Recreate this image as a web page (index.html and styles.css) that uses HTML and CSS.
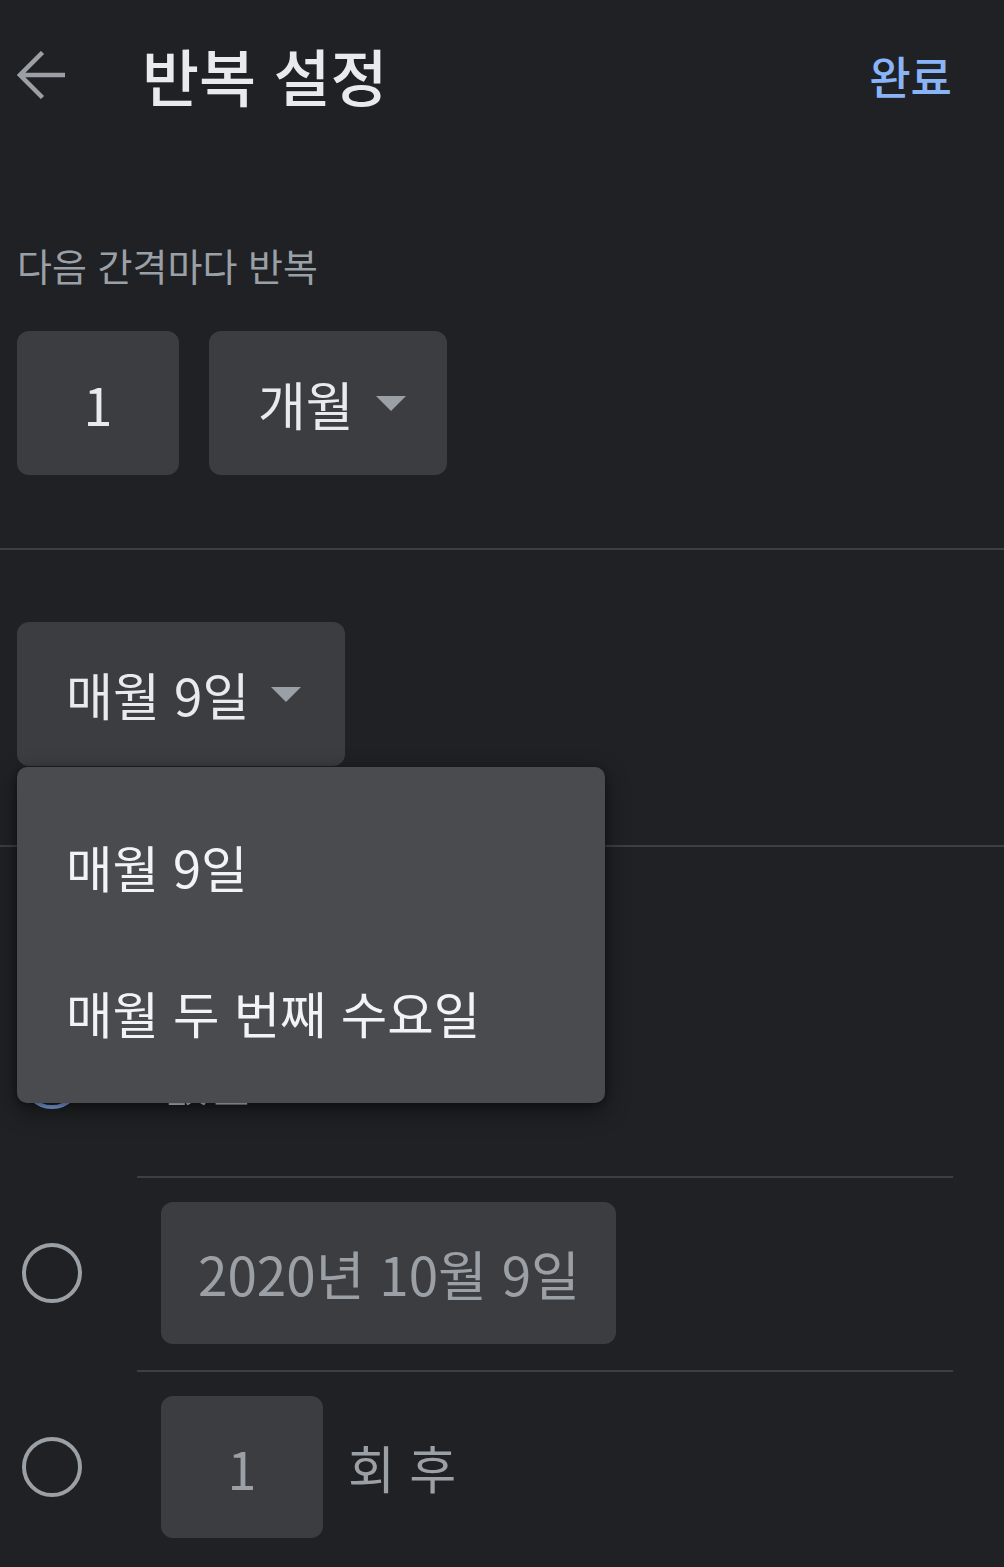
FILE: index.html
```html
<!DOCTYPE html>
<html lang="ko">
<head>
<meta charset="utf-8">
<title>반복 설정</title>
<link rel="stylesheet" href="styles.css">
</head>
<body>
<div class="screen">
  <header class="appbar">
    <button class="back" aria-label="뒤로">
      <svg width="48" height="48" viewBox="0 0 48 48"><path d="M48 24H3M25.5 1.5L3 24l22.5 22.5" fill="none" stroke="#9aa0a6" stroke-width="4.5"/></svg>
    </button>
    <h1 class="title">반복 설정</h1>
    <button class="done">완료</button>
  </header>

  <section class="interval">
    <div class="label">다음 간격마다 반복</div>
    <div class="field-row">
      <div class="field num">1</div>
      <div class="field select">개월<span class="caret"></span></div>
    </div>
  </section>

  <hr class="divider">

  <section class="monthly">
    <div class="select-wrap">
      <div class="field select">매월 9일<span class="caret"></span></div>
      <div class="menu">
        <div class="menu-item">매월 9일</div>
        <div class="menu-item">매월 두 번째 수요일</div>
      </div>
    </div>
  </section>

  <hr class="divider">

  <section class="end">
    <div class="end-label">종료</div>
    <div class="option">
      <span class="radio checked"></span>
      <div class="option-body"><span class="option-text">없음</span></div>
    </div>
    <div class="option">
      <span class="radio"></span>
      <div class="option-body"><div class="field date">2020년 10월 9일</div></div>
    </div>
    <div class="option">
      <span class="radio"></span>
      <div class="option-body"><div class="field num dim">1</div><span class="after">회 후</span></div>
    </div>
  </section>
</div>
</body>
</html>
```

FILE: styles.css
```css
* { box-sizing: border-box; }
html, body { margin: 0; padding: 0; background: #202124; }
body {
  font-family: "Noto Sans CJK KR", "Noto Sans", Roboto, sans-serif;
  color: #e8eaed;
}
.screen { width: 1004px; height: 1567px; overflow: hidden; }

.appbar {
  display: flex;
  align-items: center;
  height: 150px;
  padding: 0 52px 0 17px;
}
.back {
  width: 48px; height: 48px; padding: 0; border: 0; background: none;
  display: flex;
}
.title {
  margin: 0 0 0 77px;
  font-size: 62px;
  font-weight: 500;
  color: #e8eaed;
  letter-spacing: 0;
}
.done {
  margin-left: auto;
  border: 0; background: none; padding: 0;
  font-family: inherit;
  font-size: 45px;
  font-weight: 500;
  color: #8ab4f8;
}

.interval { padding: 94px 17px 73px; }
.label {
  font-size: 38px;
  line-height: 42px;
  color: #9aa0a6;
}
.field-row { display: flex; gap: 30px; margin-top: 45px; }

.field {
  display: flex;
  align-items: center;
  height: 144px;
  background: #3c3d40;
  border-radius: 12px;
  font-size: 52px;
  color: #e8eaed;
  white-space: nowrap;
}
.field.num { width: 162px; justify-content: center; }
.field.select { padding: 0 44px 0 49px; gap: 22px; }
.interval .field.select { padding-right: 41px; }
.monthly .field.select { font-size: 51px; }
.caret {
  width: 0; height: 0;
  border-left: 15px solid transparent;
  border-right: 15px solid transparent;
  border-top: 15px solid #9aa0a6;
}

.divider { height: 2px; margin: 0; border: 0; background: #3c4043; }

.monthly { padding: 72px 17px 79px; }
.select-wrap { position: relative; display: inline-block; vertical-align: top; }
.menu {
  position: absolute;
  top: 145px;
  left: 0;
  z-index: 2;
  width: 588px;
  padding: 26px 0 18px;
  background: #4a4b4f;
  border-radius: 10px;
  box-shadow: 0 8px 24px rgba(0,0,0,0.45), 0 2px 6px rgba(0,0,0,0.3);
}
.menu-item {
  display: flex;
  align-items: center;
  height: 146px;
  padding-left: 49px;
  font-size: 50.5px;
  color: #f1f3f4;
}

.end { padding-top: 45px; }
.end-label {
  padding-left: 17px;
  margin-bottom: 48px;
  font-size: 38px;
  line-height: 42px;
  color: #9aa0a6;
}
.option {
  display: grid;
  grid-template-columns: 137px 1fr;
  align-items: center;
}
.radio {
  margin-left: 22px;
  width: 60px; height: 60px;
  border: 4px solid #9aa0a6;
  border-radius: 50%;
  display: flex; align-items: center; justify-content: center;
}
.radio.checked { border-color: #8ab4f8; }
.radio.checked::after {
  content: "";
  width: 30px; height: 30px; border-radius: 50%;
  background: #8ab4f8;
}
.option-body {
  display: flex;
  align-items: center;
  height: 194px;
  margin-right: 51px;
  padding: 24px 0 26px 24px;
  border-top: 2px solid transparent;
}
.option + .option .option-body { border-top-color: #3c4043; }
.option-text { font-size: 51px; color: #e8eaed; }
.field.date { height: 142px; padding: 0 36px 0 37px; color: #9aa0a6; font-size: 53px; }
.field.dim { height: 142px; color: #9aa0a6; }
.after { margin-left: 25px; font-size: 51px; color: #9aa0a6; }
```
